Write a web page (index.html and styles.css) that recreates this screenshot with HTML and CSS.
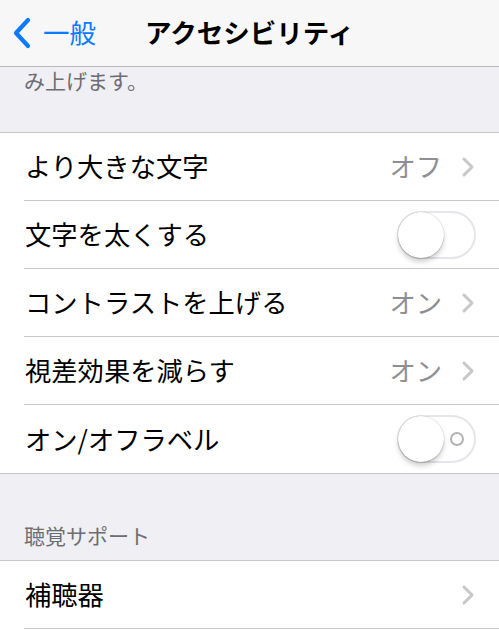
FILE: index.html
```html
<!DOCTYPE html>
<html lang="ja">
<head>
<meta charset="utf-8">
<link rel="stylesheet" href="styles.css">
</head>
<body>
<div class="screen">
  <header class="nav">
    <div class="back">
      <svg class="back-chev" width="22" height="32" viewBox="0 0 22 32"><path d="M17 3 L5 16 L17 29" fill="none" stroke="#0a7aff" stroke-width="4.2" stroke-linecap="round" stroke-linejoin="round"/></svg>
      <span class="back-label">一般</span>
    </div>
    <div class="title">アクセシビリティ</div>
  </header>
  <main class="content">
    <p class="footer-text">み上げます。</p>
    <section class="group group-first">
      <div class="row">
        <div class="row-inner">
          <span class="label">より大きな文字</span>
          <span class="value">オフ</span>
          <svg class="chev" width="14" height="22" viewBox="0 0 14 22"><path d="M3 3 L11 11 L3 19" fill="none" stroke="#c7c7cc" stroke-width="3" stroke-linecap="round" stroke-linejoin="round"/></svg>
        </div>
      </div>
      <div class="row">
        <div class="row-inner">
          <span class="label">文字を太くする</span>
          <span class="switch"><span class="knob"></span></span>
        </div>
      </div>
      <div class="row">
        <div class="row-inner">
          <span class="label">コントラストを上げる</span>
          <span class="value">オン</span>
          <svg class="chev" width="14" height="22" viewBox="0 0 14 22"><path d="M3 3 L11 11 L3 19" fill="none" stroke="#c7c7cc" stroke-width="3" stroke-linecap="round" stroke-linejoin="round"/></svg>
        </div>
      </div>
      <div class="row">
        <div class="row-inner">
          <span class="label">視差効果を減らす</span>
          <span class="value">オン</span>
          <svg class="chev" width="14" height="22" viewBox="0 0 14 22"><path d="M3 3 L11 11 L3 19" fill="none" stroke="#c7c7cc" stroke-width="3" stroke-linecap="round" stroke-linejoin="round"/></svg>
        </div>
      </div>
      <div class="row">
        <div class="row-inner last">
          <span class="label">オン/オフラベル</span>
          <span class="switch"><span class="off-mark"></span><span class="knob"></span></span>
        </div>
      </div>
    </section>
    <h2 class="section-header">聴覚サポート</h2>
    <section class="group">
      <div class="row">
        <div class="row-inner">
          <span class="label">補聴器</span>
          <svg class="chev" width="14" height="22" viewBox="0 0 14 22"><path d="M3 3 L11 11 L3 19" fill="none" stroke="#c7c7cc" stroke-width="3" stroke-linecap="round" stroke-linejoin="round"/></svg>
        </div>
      </div>
      <div class="row">
        <div class="row-inner last">
          <span class="label">&nbsp;</span>
        </div>
      </div>
    </section>
  </main>
</div>
</body>
</html>
```

FILE: styles.css
```css
* { box-sizing: border-box; }
html, body {
  margin: 0;
  padding: 0;
}
body {
  font-family: "Noto Sans CJK JP", "Noto Sans", sans-serif;
  background: #efeff4;
}
.screen {
  width: 499px;
  height: 640px;
  overflow: hidden;
  background: #efeff4;
  position: relative;
}
.nav {
  height: 67px;
  background: #f7f7f7;
  border-bottom: 1px solid #b8b8bc;
  display: flex;
  align-items: center;
  justify-content: center;
  position: relative;
}
.back {
  position: absolute;
  left: 11px;
  top: 0;
  height: 66px;
  display: flex;
  align-items: center;
  gap: 10px;
  color: #0a7aff;
}
.back-chev { display: block; }
.back-label {
  font-size: 26.5px;
  line-height: 1;
  margin-top: -1px;
}
.title {
  font-size: 26.5px;
  font-weight: 700;
  color: #000;
  line-height: 1;
  margin-top: -1px;
}
.content {
  display: flex;
  flex-direction: column;
}
.footer-text {
  margin: 0;
  padding: 0 0 0 24px;
  height: 65px;
  font-size: 21px;
  line-height: 27px;
  color: #6d6d72;
}
.group {
  background: #fff;
  border-top: 1px solid #c8c7cc;
  border-bottom: 1px solid #c8c7cc;
}
.row {
  padding-left: 24px;
}
.row-inner {
  height: 68px;
  display: flex;
  align-items: center;
  border-bottom: 1px solid #c8c7cc;
  padding-right: 24px;
}
.row-inner.last { border-bottom: none; height: 68px; }
.label {
  flex: 1;
  font-size: 26.3px;
  color: #000;
  line-height: 1;
  padding-left: 1px;
}
.value {
  font-size: 26.3px;
  color: #8e8e93;
  line-height: 1;
  margin-right: 19px;
}
.chev { display: block; }
.switch {
  position: relative;
  width: 79px;
  height: 48px;
  border-radius: 24px;
  border: 2px solid #e5e5ea;
  background: #fff;
  margin-right: -1px;
}
.knob {
  position: absolute;
  left: -1px;
  top: -1px;
  width: 46px;
  height: 46px;
  border-radius: 50%;
  background: #fff;
  box-shadow: 0 4px 5px rgba(0,0,0,0.18), 0 0 1px rgba(0,0,0,0.3), 0 1px 1px rgba(0,0,0,0.12);
}
.off-mark {
  position: absolute;
  right: 10px;
  top: 15px;
  width: 14px;
  height: 14px;
  border-radius: 50%;
  border: 2px solid #b3b3b3;
}
.section-header {
  margin: 0;
  height: 86px;
  padding: 48px 0 0 24px;
  font-size: 21px;
  font-weight: 400;
  line-height: 26px;
  color: #6d6d72;
}
```
